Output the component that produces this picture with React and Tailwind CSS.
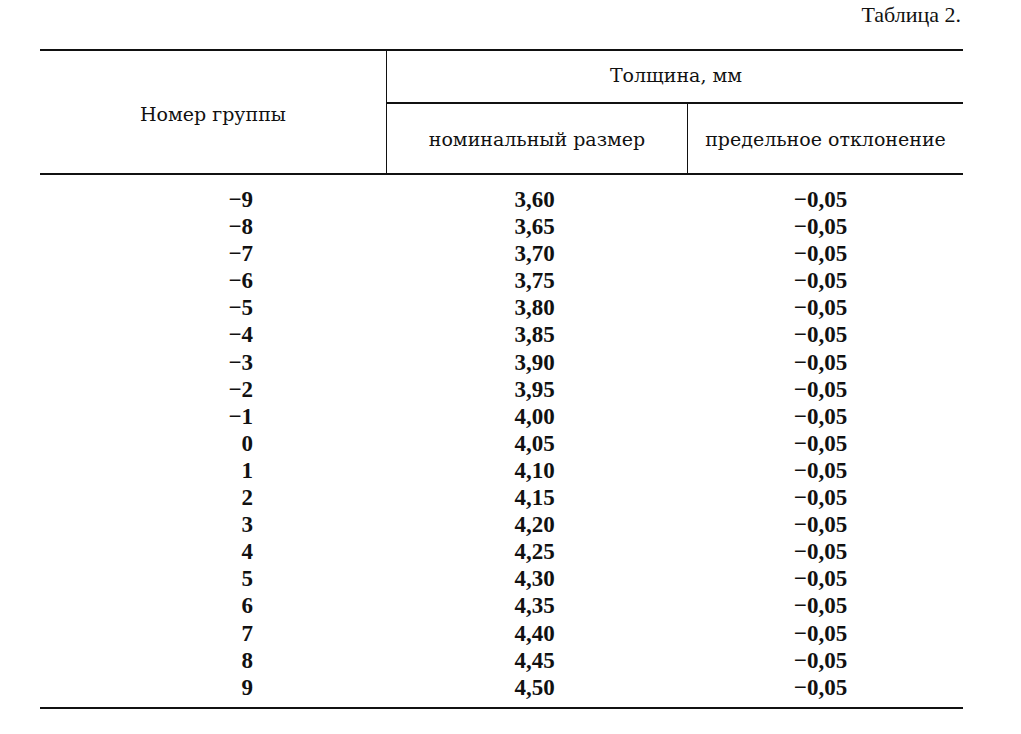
import React from "react";

const rows = [
  ["−9", "3,60"],
  ["−8", "3,65"],
  ["−7", "3,70"],
  ["−6", "3,75"],
  ["−5", "3,80"],
  ["−4", "3,85"],
  ["−3", "3,90"],
  ["−2", "3,95"],
  ["−1", "4,00"],
  ["0", "4,05"],
  ["1", "4,10"],
  ["2", "4,15"],
  ["3", "4,20"],
  ["4", "4,25"],
  ["5", "4,30"],
  ["6", "4,35"],
  ["7", "4,40"],
  ["8", "4,45"],
  ["9", "4,50"],
];

export default function App() {
  return (
    <div className="w-[1021px] h-[734px] bg-white text-[#111] pl-[40px] pt-[3px]">
      <div className="w-[923px]">
        <p className="text-right pr-[2px] h-[46px] text-[22px] leading-[24px] font-['Liberation_Serif',serif]">
          Таблица 2.
        </p>

        <div className="border-t-2 border-b-2 border-[#111]">
          <div className="grid grid-cols-[347px_301px_275px] border-b-2 border-[#111] font-['DejaVu_Serif',serif] text-[19px]">
            <div className="row-span-2 flex items-center justify-center border-r border-[#111] pt-[4px]">
              Номер группы
            </div>
            <div className="col-span-2 h-[53px] flex items-center justify-center border-b-2 border-[#111] pl-[2px] pb-[2px]">
              Толщина, мм
            </div>
            <div className="h-[69px] flex items-center justify-center border-r border-[#111] pt-[2px]">
              номинальный размер
            </div>
            <div className="h-[69px] flex items-center justify-center pt-[2px]">
              предельное отклонение
            </div>
          </div>

          <div className="pt-[11px] pb-[6px] font-['Liberation_Serif',serif] font-bold text-[23px]">
            {rows.map(([group, size]) => (
              <div
                key={group}
                className="grid grid-cols-[347px_301px_275px] h-[27.1px] leading-[27px]"
              >
                <div className="text-right pr-[134px]">{group}</div>
                <div className="text-center pr-[6px]">{size}</div>
                <div className="text-center pr-[10px]">−0,05</div>
              </div>
            ))}
          </div>
        </div>
      </div>
    </div>
  );
}
